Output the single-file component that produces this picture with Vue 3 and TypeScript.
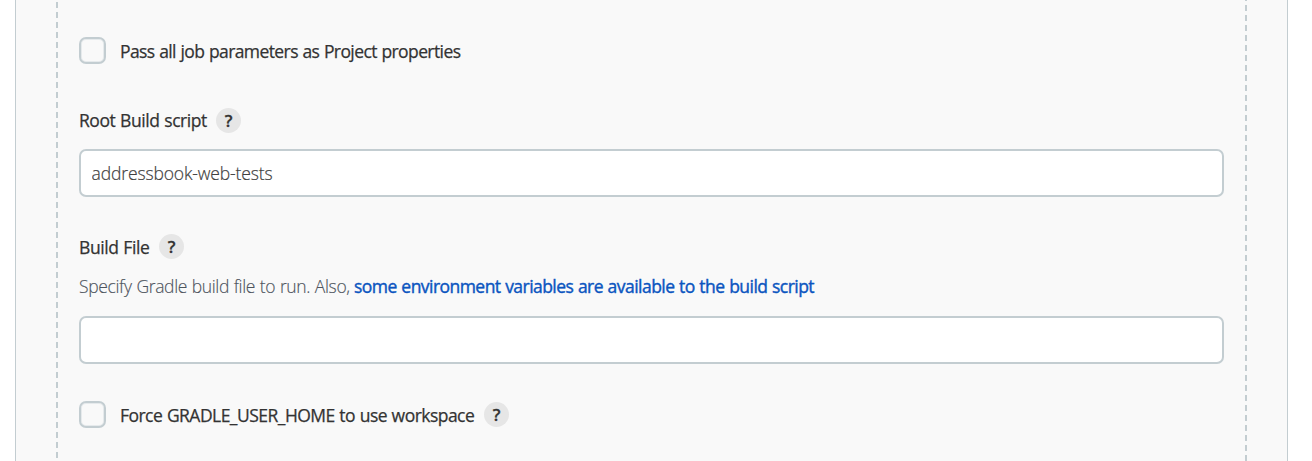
<script setup lang="ts">
import { ref } from 'vue'

const passParameters = ref(false)
const forceHome = ref(false)
const rootScript = ref('addressbook-web-tests')
const buildFile = ref('')
</script>

<template>
  <main class="card">
    <section class="group">
      <div class="row first">
        <input id="pass" v-model="passParameters" class="check" type="checkbox" />
        <label for="pass" class="label pass">Pass all job parameters as Project properties</label>
      </div>
      <div class="row title root-title">
        <label for="root" class="label root">Root Build script</label>
        <button class="help" type="button">?</button>
      </div>
      <input id="root" v-model="rootScript" class="field" type="text" spellcheck="false" />
      <div class="row title file-title">
        <label for="file" class="label file">Build File</label>
        <button class="help" type="button">?</button>
      </div>
      <p class="description">
        <span class="intro">Specify Gradle build file to run. Also,</span>
        <a class="link" href="#">some environment variables are available to the build script</a>
      </p>
      <input id="file" v-model="buildFile" class="field" type="text" />
      <div class="row last">
        <input id="force" v-model="forceHome" class="check" type="checkbox" />
        <label for="force" class="label force">Force GRADLE_USER_HOME to use workspace</label>
        <button class="help" type="button">?</button>
      </div>
    </section>
  </main>
</template>

<style>
body {
  background: #fff;
  overflow: hidden;
}
</style>

<style scoped>
.card {
  box-sizing: border-box;
  width: 1273px;
  height: 461px;
  margin-left: 15px;
  padding: 0 40px;
  border: solid #c3cdd1;
  border-width: 0 1px;
  background: #f9f9f9;
  font-family: "Open Sans", "Noto Sans", sans-serif;
  font-size: 17.5px;
  color: #333;
}
.group {
  box-sizing: border-box;
  height: 461px;
  padding: 37px 23px 0;
  background:
    repeating-linear-gradient(#c3cdd1 0 6px, transparent 6px 10px) 0 -8px / 2px 480px no-repeat,
    repeating-linear-gradient(#c3cdd1 0 6px, transparent 6px 10px) 100% -5px / 2px 480px no-repeat;
}
.row {
  display: flex;
  align-items: center;
  height: 27px;
}
.title {
  height: 25px;
}
.root-title {
  margin: 44px 0 16px;
}
.file-title {
  margin-top: 37px;
}
.last {
  margin-top: 37px;
}
.check {
  appearance: none;
  box-sizing: border-box;
  flex: none;
  width: 27px;
  height: 27px;
  margin: 0 14px 0 0;
  border: 2px solid #c3cdd1;
  border-radius: 7px;
  background: transparent;
  box-shadow: inset 0 0 0 1px #e6eaec;
}
.label {
  flex: none;
  font-weight: 500;
  line-height: 24px;
  white-space: nowrap;
  -webkit-text-stroke: 0.25px currentColor;
}
.pass {
  width: 341px;
  letter-spacing: -0.59px;
  word-spacing: 0.6px;
}
.root {
  width: 128px;
  padding-bottom: 1px;
  letter-spacing: -0.43px;
  word-spacing: 0.6px;
}
.file {
  width: 71px;
  letter-spacing: -0.4px;
  word-spacing: 0.6px;
}
.force {
  width: 355px;
  letter-spacing: -0.53px;
  word-spacing: 0.6px;
}
.help {
  flex: none;
  width: 25px;
  height: 25px;
  margin: 0 0 0 9px;
  padding: 0;
  border: 0;
  border-radius: 50%;
  background: #e6e6e6;
  color: #333;
  font: 600 17px/25px "Open Sans", "Noto Sans", sans-serif;
  text-align: center;
  -webkit-text-stroke: 0.3px currentColor;
}
.field {
  display: block;
  box-sizing: border-box;
  width: 1145px;
  height: 48px;
  margin: 0;
  padding: 0 10.5px;
  border: 2px solid #c3cdd1;
  border-radius: 7px;
  outline: 0;
  background: #fff;
  color: #404040;
  font: 300 17.5px "Open Sans", "Noto Sans", sans-serif;
  letter-spacing: -0.13px;
  -webkit-text-stroke: 0.2px currentColor;
}
.description {
  display: flex;
  height: 24px;
  margin: 15px 0 18px;
  line-height: 24px;
  white-space: nowrap;
}
.intro {
  width: 275px;
  color: #4d545d;
  font-weight: 300;
  letter-spacing: -0.35px;
  word-spacing: 0.5px;
  -webkit-text-stroke: 0.15px currentColor;
}
.link {
  color: #0b55c0;
  font-weight: 500;
  letter-spacing: -0.54px;
  word-spacing: 0.6px;
  text-decoration: none;
  -webkit-text-stroke: 0.4px currentColor;
}
</style>
